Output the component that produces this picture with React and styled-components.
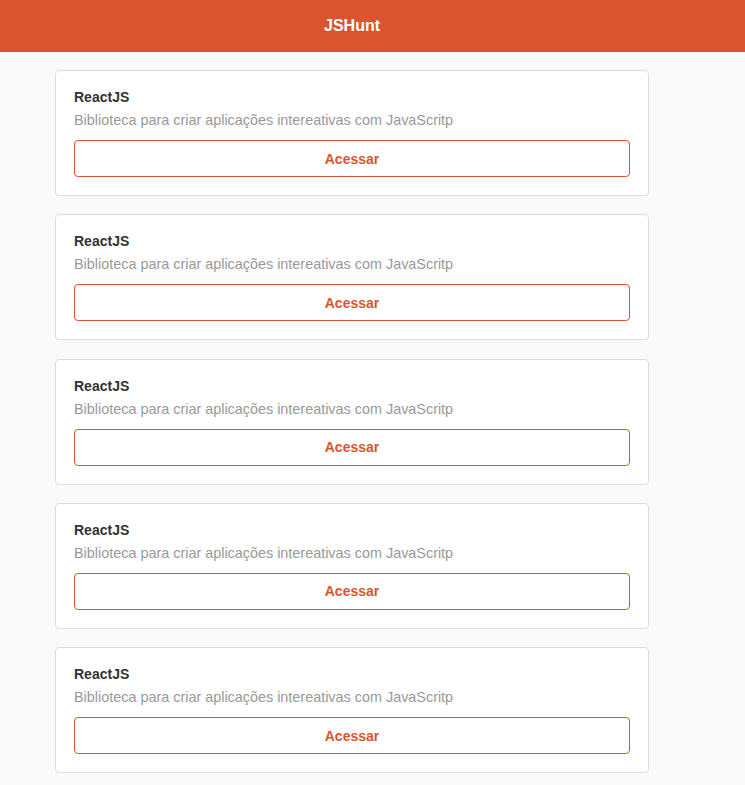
import React from 'react'
import styled, { createGlobalStyle } from 'styled-components'

const products = Array.from({ length: 5 }, (_, i) => ({
  id: i,
  title: 'ReactJS',
  description: 'Biblioteca para criar aplicações intereativas com JavaScritp',
}))

const App = () => {
  return (
    <>
      <GlobalStyle />
      <Header>JSHunt</Header>
      <ProductList>
        {products.map(product => (
          <Article key={product.id}>
            <Title>{product.title}</Title>
            <Description>{product.description}</Description>
            <Access href="#">Acessar</Access>
          </Article>
        ))}
      </ProductList>
    </>
  )
}

export default App

const GlobalStyle = createGlobalStyle`
  * {
    margin: 0;
    padding: 0;
    box-sizing: border-box;
  }
  body {
    background: #fafafa;
    font-family: "Liberation Sans", Arial, sans-serif;
    -webkit-font-smoothing: antialiased;
  }
`

const Header = styled.header`
  width: 100%;
  height: 52px;
  padding-right: 41px;
  background: #da552f;
  color: #fff;
  font-size: 16px;
  font-weight: bold;
  display: flex;
  justify-content: center;
  align-items: center;
`

const ProductList = styled.div`
  width: 594px;
  margin: 18px 0 0 55px;
  display: flex;
  flex-direction: column;
  gap: 18.25px;
`

const Article = styled.article`
  background: #fff;
  border: 1px solid #ddd;
  border-radius: 4px;
  padding: 16px 18px 18px;
`

const Title = styled.strong`
  display: block;
  font-size: 14px;
  line-height: 20px;
  color: #333;
`

const Description = styled.p`
  font-size: 14.4px;
  line-height: 20px;
  color: #999;
  margin-top: 3px;
`

const Access = styled.a`
  height: 37px;
  margin-top: 10px;
  border: 1px solid #da552f;
  border-radius: 4px;
  color: #da552f;
  font-size: 14px;
  font-weight: bold;
  text-decoration: none;
  display: flex;
  justify-content: center;
  align-items: center;
`
